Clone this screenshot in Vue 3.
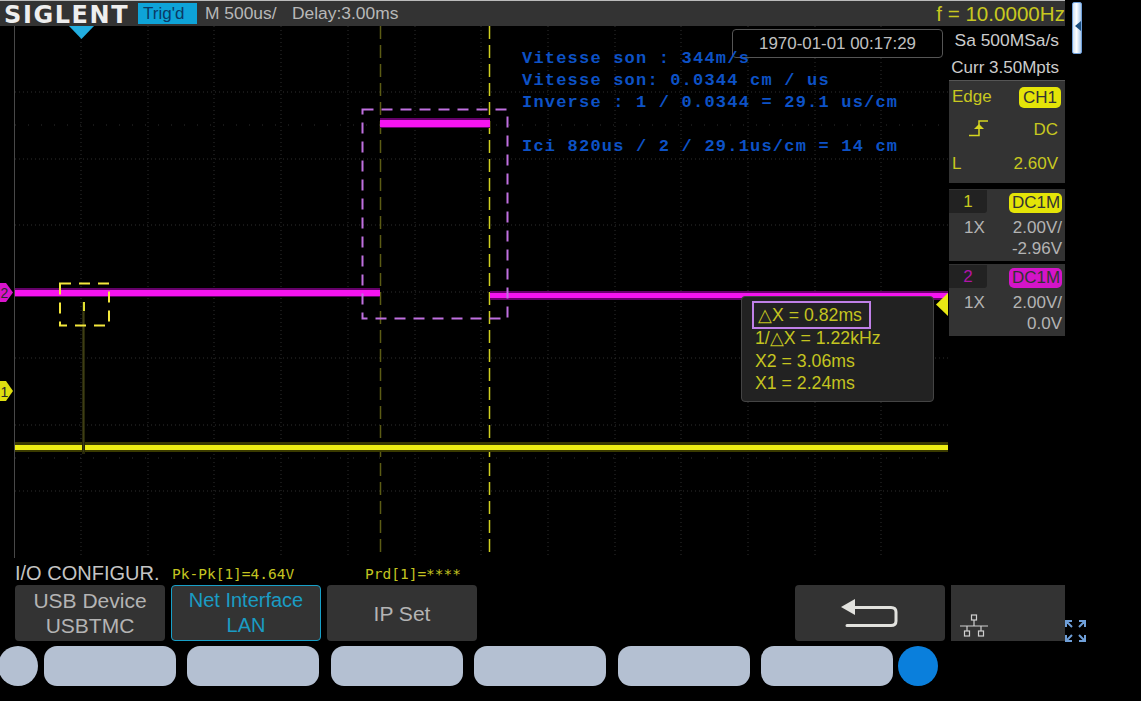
<script setup>
const gridX = [81, 148, 214, 281, 348, 415, 481, 548, 615, 681, 748, 815, 881];
const gridY = [92, 159, 225, 292, 358, 425, 491];

const notes = [
  { text: 'Vitesse son : 344m/s', top: 24 },
  { text: 'Vitesse son: 0.0344 cm / us', top: 46 },
  { text: 'Inverse : 1 / 0.0344 = 29.1 us/cm', top: 68 },
  { text: 'Ici 820us / 2 / 29.1us/cm = 14 cm', top: 112 },
];

const channels = [
  { id: 1, cls: 'ch1', scale: '2.00V/', offset: '-2.96V' },
  { id: 2, cls: 'ch2', scale: '2.00V/', offset: '0.0V' },
];

const softkeys = [
  { lines: ['USB Device', 'USBTMC'] },
  { lines: ['Net Interface', 'LAN'], active: true },
  { lines: ['IP Set'] },
];

const pills = [1, 2, 3, 4, 5, 6];
</script>

<template>
  <div class="scope">
    <header class="topbar">
      <span class="logo">SIGLENT</span>
      <span class="trig">Trig'd</span>
      <span class="time">M 500us/</span>
      <span class="delay">Delay:3.00ms</span>
      <span class="freq">f = 10.0000Hz</span>
    </header>
    <div class="tab">
      <svg width="6" height="10" viewBox="0 0 6 10"><path d="M0 5 6 0V10Z" fill="#1c4f80" /></svg>
    </div>

    <main class="middle">
      <div class="plot">
        <svg class="wave" width="948" height="532" viewBox="0 26 948 532">
          <g stroke="#2e2e2e" stroke-dasharray="1 3">
            <line v-for="x in gridX" :key="x" :x1="x" :x2="x" y1="26" y2="558" />
            <line v-for="y in gridY" :key="y" x1="15" x2="948" :y1="y" :y2="y" />
            <line x1="15" x2="948" y1="125" y2="125" stroke-dasharray="1 12" />
            <line x1="15" x2="948" y1="458" y2="458" stroke-dasharray="1 12" />
          </g>
          <line x1="14.5" x2="14.5" y1="26" y2="558" stroke="#484848" />
          <line x1="15" x2="948" y1="558.5" y2="558.5" stroke="#444" />
          <line x1="948.5" x2="948.5" y1="26" y2="558" stroke="#555" />

          <g class="soft">
            <!-- cursors -->
            <line x1="380.5" x2="380.5" y1="26" y2="558" stroke="#5c5c14" stroke-width="1.5" stroke-dasharray="13 6" />
            <line x1="489.5" x2="489.5" y1="26" y2="558" stroke="#d0d020" stroke-width="1.5" stroke-dasharray="13 6" />

            <!-- traces -->
            <rect x="15" y="442" width="933" height="10" fill="#3a3a00" />
            <rect x="15" y="445" width="933" height="5" fill="#eded14" />
            <rect x="82" y="302" width="3" height="152" fill="#26260a" />
            <rect x="83" y="312" width="1" height="140" fill="#3e3e14" />
            <rect x="83" y="302" width="2" height="9" fill="#e0e030" />
            <rect x="15" y="288" width="365" height="9" fill="#66006a" />
            <rect x="15" y="290" width="365" height="6" fill="#f614f0" />
            <rect x="380" y="118" width="110" height="10" fill="#66006a" />
            <rect x="380" y="120" width="110" height="7" fill="#f614f0" />
            <rect x="490" y="291" width="458" height="9" fill="#66006a" />
            <rect x="490" y="293" width="458" height="5" fill="#f614f0" />
          </g>

          <!-- zones -->
          <rect x="362.5" y="109.5" width="145" height="209" fill="none" stroke="#c070e0" stroke-width="2" stroke-dasharray="11 8" />
          <rect x="60" y="283.5" width="49" height="42" fill="none" stroke="#f4e83c" stroke-width="2" stroke-dasharray="11 8" />

          <!-- markers -->
          <path d="M69 26H94L81.5 39Z" fill="#22aee0" />
          <path d="M0 283H6L13 292.5 6 302H0Z" fill="#d814cc" />
          <text x="0.5" y="298" class="mark">2</text>
          <path d="M0 381H6L13 391 6 401H0Z" fill="#dede10" />
          <text x="0.5" y="396.5" class="mark">1</text>
          <path d="M948 293V316L936 304.5Z" fill="#e8e814" />
        </svg>

        <div class="note-layer">
          <div v-for="n in notes" :key="n.text" class="note" :style="{ top: n.top + 'px' }">{{ n.text }}</div>
        </div>

        <div class="date">1970-01-01 00:17:29</div>

        <div class="readout">
          <div class="line first">△X = 0.82ms</div>
          <div class="line">1/△X = 1.22kHz</div>
          <div class="line">X2 = 3.06ms</div>
          <div class="line">X1 = 2.24ms</div>
        </div>
      </div>

      <aside class="side">
        <div class="sample">
          <div>Sa 500MSa/s</div>
          <div class="curr">Curr 3.50Mpts</div>
        </div>
        <div class="trigger">
          <div class="row">
            <span>Edge</span>
            <span class="pill yellow">CH1</span>
          </div>
          <div class="row">
            <svg class="edge" width="22" height="18" viewBox="0 0 22 18">
              <path d="M1 16.5H11V2H20" fill="none" stroke="#d6d620" stroke-width="1.5" />
              <path d="M11 5 16 10H6Z" fill="#d6d620" />
            </svg>
            <span>DC</span>
          </div>
          <div class="row">
            <span>L</span>
            <span>2.60V</span>
          </div>
        </div>
        <div v-for="c in channels" :key="c.id" class="channel" :class="c.cls">
          <div class="chan-head">
            <span class="chan-no">{{ c.id }}</span>
            <span class="pill">DC1M</span>
          </div>
          <div class="chan-body">
            <span class="probe">1X</span>
            <span class="vals">
              <span>{{ c.scale }}</span>
              <span>{{ c.offset }}</span>
            </span>
          </div>
        </div>
      </aside>
    </main>

    <div class="status">
      <span class="menu-name">I/O CONFIGUR.</span>
      <span class="meas pk">Pk-Pk[1]=4.64V</span>
      <span class="meas">Prd[1]=****</span>
    </div>

    <div class="softkeys">
      <button v-for="k in softkeys" :key="k.lines[0]" class="key" :class="{ active: k.active }">
        <span v-for="l in k.lines" :key="l">{{ l }}</span>
      </button>
      <button class="key back">
        <svg width="58" height="30" viewBox="0 0 58 30">
          <path d="M6 9.5H50Q55 9.5 55 14V23Q55 27.5 50 27.5H6" fill="none" stroke="#e2e2de" stroke-width="3" stroke-linecap="round" />
          <path d="M0 9 14 1V17Z" fill="#e2e2de" />
        </svg>
      </button>
      <div class="key net">
        <svg width="30" height="24" viewBox="0 0 30 24" fill="none" stroke="#d0d0d0" stroke-width="1.2">
          <rect x="12.5" y="1" width="5" height="5" />
          <path d="M15 6V12M1 12H29M8 12V17M22 12V17" />
          <rect x="5.5" y="17" width="5" height="5" />
          <rect x="19.5" y="17" width="5" height="5" />
        </svg>
      </div>
      <svg class="full" width="21" height="22" viewBox="0 0 21 22" fill="none" stroke="#6f9fd8" stroke-width="2">
        <path d="M1 7V1H7M1 1 7 7M14 1H20V7M20 1 14 7M1 15V21H7M1 21 7 15M14 21H20V15M20 21 14 15" />
      </svg>
    </div>

    <div class="hardkeys">
      <span class="round"></span>
      <span v-for="p in pills" :key="p" class="hard"></span>
      <span class="round on"></span>
    </div>
  </div>
</template>

<style scoped>
.scope {
  position: relative;
  width: 1141px;
  height: 701px;
  overflow: hidden;
  background: #000;
  color: #c4c4c4;
  font-family: "Liberation Sans", Arial, sans-serif;
}

.topbar {
  display: flex;
  align-items: center;
  width: 1065px;
  height: 26px;
  box-sizing: border-box;
  border-top: 1px solid #bbb;
  background: #333;
  font-size: 17.4px;
  color: #b8b8b8;
}

.logo {
  margin: 2px 0 0 4px;
  width: 134px;
  font-family: "DejaVu Sans", sans-serif;
  font-size: 24px;
  font-weight: 700;
  letter-spacing: 1.6px;
  line-height: 24px;
  white-space: nowrap;
  color: #eee;
}

.trig {
  width: 59px;
  height: 21px;
  padding-left: 5px;
  box-sizing: border-box;
  background: #0ea3d8;
  color: #0a3a66;
  font-size: 17px;
  line-height: 21px;
}

.time {
  margin-left: 8px;
  width: 87px;
}

.freq {
  margin-left: auto;
  color: #c8c820;
  font-size: 20.6px;
}

.tab {
  position: absolute;
  left: 1072px;
  top: 2px;
  display: flex;
  align-items: center;
  width: 10px;
  height: 52px;
  padding-bottom: 4px;
  padding-left: 2px;
  box-sizing: border-box;
  border-radius: 2px;
  background: linear-gradient(90deg, #cfe2f6, #fff 45%, #a9c8ea);
  border: 1px solid #6f9fd8;
}

.middle {
  display: flex;
  height: 532px;
}

.plot {
  position: relative;
  width: 948px;
  flex: none;
}

.wave {
  display: block;
  overflow: hidden;
}

.soft {
  filter: blur(0.5px);
}

.mark {
  font-size: 14px;
  fill: #2a2a2a;
}

.note-layer {
  position: absolute;
  left: 522px;
  top: 0;
  z-index: 2;
}

.note {
  position: absolute;
  left: 0;
  white-space: pre;
  color: #0d52c6;
  font-family: "Liberation Mono", monospace;
  font-size: 17px;
  font-weight: 700;
  line-height: 18px;
  letter-spacing: 1.2px;
}

.date {
  position: absolute;
  left: 732px;
  top: 3px;
  width: 211px;
  height: 29px;
  box-sizing: border-box;
  border: 1px solid #555;
  border-radius: 4px;
  background: #000;
  text-align: center;
  font-size: 16.9px;
  line-height: 27px;
  color: #c0c0c0;
}

.readout {
  position: absolute;
  left: 741px;
  top: 270px;
  width: 193px;
  height: 106px;
  padding: 4px 0 0 13px;
  box-sizing: border-box;
  border: 1px solid #444;
  border-radius: 4px;
  background: #222;
  color: #c4c420;
  font-size: 17.7px;
}

.line {
  height: 22.6px;
  line-height: 22px;
}

.line.first {
  width: 119px;
  height: 28px;
  margin: 0 0 -2px -3px;
  padding-left: 4px;
  box-sizing: border-box;
  border: 2px solid #c080e8;
  line-height: 25px;
}

.side {
  display: flex;
  flex-direction: column;
  width: 116px;
  margin-left: 1px;
  font-size: 17.4px;
}

.sample {
  display: flex;
  flex-direction: column;
  align-items: flex-end;
  gap: 7px;
  height: 54px;
  padding: 4px 6px 0 0;
  box-sizing: border-box;
  white-space: nowrap;
  color: #ccc;
}

.curr {
  font-size: 17px;
}

.trigger {
  display: flex;
  flex-direction: column;
  justify-content: space-between;
  height: 103px;
  padding: 5px 4px 8px 3px;
  box-sizing: border-box;
  border-top: 1px solid #555;
  background: #333;
  color: #c8c820;
  font-size: 17px;
}

.row {
  display: flex;
  justify-content: space-between;
  align-items: center;
  height: 22px;
}

.edge {
  margin: 0 0 4px 16px;
}

.row:nth-child(2) {
  margin-top: -1px;
}

.row:nth-child(2) span,
.row:nth-child(3) span:last-child {
  padding-right: 3px;
}

.pill {
  height: 21px;
  padding: 0 3px;
  border-radius: 5px;
  line-height: 21px;
  color: #333;
}

.pill.yellow {
  width: 36px;
  background: #e4e408;
  text-align: center;
}

.channel {
  height: 72px;
  margin-bottom: 3px;
  background: #333;
}

.trigger + .channel {
  margin-top: 6px;
}

.chan-head {
  display: flex;
  justify-content: space-between;
  align-items: center;
  height: 28px;
}

.chan-no {
  align-self: flex-start;
  width: 38px;
  height: 23px;
  margin-top: 1px;
  border-radius: 0 0 3px 0;
  background: #222;
  text-align: center;
  font-size: 17px;
  line-height: 23px;
}

.channel .pill {
  margin-right: 3px;
  width: 47px;
  height: 20px;
  text-align: center;
  font-size: 17px;
  line-height: 20px;
}

.ch1 .chan-no {
  color: #c8c820;
}

.ch1 .pill {
  background: #e4e408;
}

.ch2 .chan-no {
  color: #b014a8;
}

.ch2 .pill {
  background: #d414c8;
}

.chan-body {
  display: flex;
  justify-content: space-between;
  padding: 0 3px 0 15px;
  font-size: 17px;
  color: #b4b4b4;
}

.vals {
  display: flex;
  flex-direction: column;
  align-items: flex-end;
  line-height: 21px;
}

.probe {
  line-height: 21px;
}

.status {
  display: flex;
  align-items: center;
  height: 27px;
  padding: 4px 0 0 15px;
  box-sizing: border-box;
}

.menu-name {
  width: 157px;
  font-size: 20px;
  color: #c4c4c4;
}

.meas {
  color: #c4c420;
  font-family: "DejaVu Sans Mono", monospace;
  font-size: 14.5px;
}

.pk {
  width: 193px;
}

.softkeys {
  position: relative;
  display: flex;
  gap: 6px;
  height: 56px;
  padding-left: 15px;
}

.key {
  display: flex;
  flex-direction: column;
  align-items: center;
  justify-content: center;
  width: 150px;
  height: 56px;
  padding: 0;
  box-sizing: border-box;
  border: 0;
  border-radius: 4px;
  background: #333;
  color: #b4b4b4;
  font-family: inherit;
  font-size: 21px;
  line-height: 25px;
}

.key.active {
  border: 1px solid #18a0c8;
  color: #1a9cc4;
  font-size: 20px;
}

.back {
  margin-left: 312px;
}

.net {
  width: 114px;
  border-radius: 0;
  align-items: flex-start;
  justify-content: flex-end;
  padding: 0 0 3px 8px;
}

.full {
  position: absolute;
  left: 1065px;
  top: 35px;
}

.hardkeys {
  display: flex;
  align-items: center;
  height: 40px;
  margin-top: 5px;
  padding-left: 44px;
  position: relative;
  gap: 11.4px;
}

.hard {
  width: 132px;
  height: 40px;
  border-radius: 13px;
  background: #b4c0d2;
}

.round {
  width: 40px;
  height: 40px;
  border-radius: 50%;
  background: #b4c0d2;
}

.round:first-child {
  position: absolute;
  left: -2px;
}

.round.on {
  margin-left: -6.4px;
  background: #0a7fdc;
}
</style>
